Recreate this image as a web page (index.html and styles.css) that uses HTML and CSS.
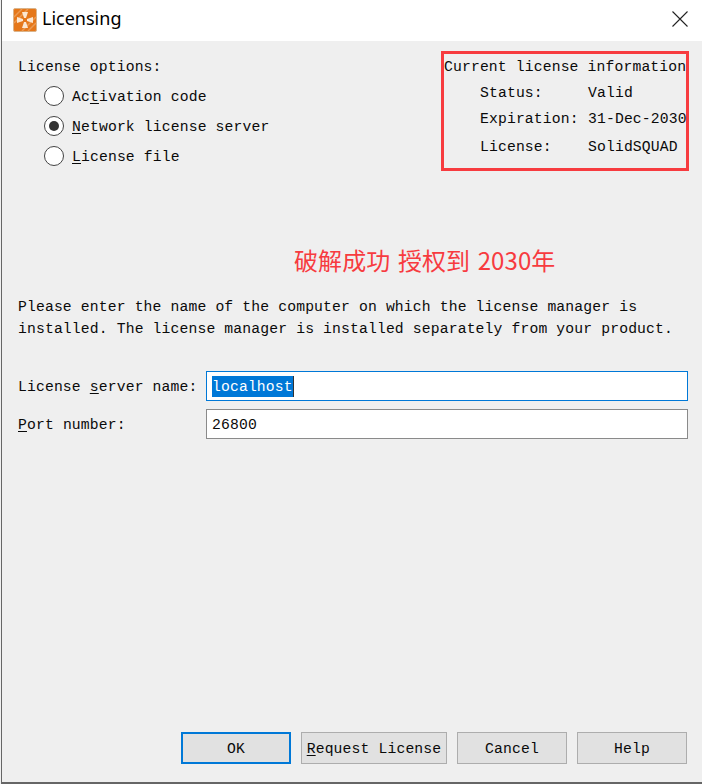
FILE: index.html
```html
<!DOCTYPE html>
<html lang="en">
<head>
<meta charset="utf-8">
<title>Licensing</title>
<link rel="stylesheet" href="styles.css">
</head>
<body>
<div class="window">
	<div class="title_bar">
		<svg class="app_icon" width="24" height="24" viewBox="0 0 24 24">
			<rect x="0.5" y="0.5" width="23" height="23" rx="1.5" fill="#e5771a" stroke="#d9b48c"/>
			<path d="M1 9L9 1M1 15L15 1M9 23L23 9M15 23L23 15" stroke="#eb9a52" stroke-width="1.5"/>
			<path d="M9 4H15L13 10H11ZM9 20H15L13 14H11ZM4 9V15L10 13V11ZM20 9V15L14 13V11Z" fill="#fbe6d0"/>
		</svg>
		<span class="title_text">Licensing</span>
		<svg class="close_btn" width="16" height="16" viewBox="0 0 16 16">
			<path d="M0.5 0.5L15.5 15.5M15.5 0.5L0.5 15.5" stroke="#222" stroke-width="1.1" fill="none"/>
		</svg>
	</div>
	<div class="content">
		<div class="top_row">
			<div class="options">
				<div class="options_title">License options:</div>
				<div class="radio_row"><i class="radio"></i><span>Ac<u>t</u>ivation code</span></div>
				<div class="radio_row"><i class="radio checked"></i><span><u>N</u>etwork license server</span></div>
				<div class="radio_row"><i class="radio"></i><span><u>L</u>icense file</span></div>
			</div>
			<div class="info_box">
				<div class="info_title">Current license information</div>
				<div class="info_row"><span>Status:</span><span>Valid</span></div>
				<div class="info_row"><span>Expiration:</span><span>31-Dec-2030</span></div>
				<div class="info_row"><span>License:</span><span>SolidSQUAD</span></div>
			</div>
		</div>
		<div class="notice">破解成功 授权到 2030年</div>
		<p class="hint">Please enter the name of the computer on which the license manager is<br>installed. The license manager is installed separately from your product.</p>
		<div class="field_row first">
			<label>License <u>s</u>erver name:</label>
			<div class="field focused"><span class="selected">localhost</span><i class="caret"></i></div>
		</div>
		<div class="field_row">
			<label><u>P</u>ort number:</label>
			<div class="field">26800</div>
		</div>
		<div class="buttons">
			<div class="btn btn_ok">OK</div>
			<div class="btn btn_wide"><u>R</u>equest License</div>
			<div class="btn">Cancel</div>
			<div class="btn">Help</div>
		</div>
	</div>
</div>
</body>
</html>
```

FILE: styles.css
```css
html,body{margin:0;padding:0;background:#f0f0f0;}
body{font-family:"Liberation Mono",monospace;font-size:14.73px;letter-spacing:.14px;color:#0a0a0a;}
u{text-underline-offset:2px;}
.window{width:701px;height:784px;margin-left:1px;box-sizing:border-box;border-left:1px solid #666;border-bottom:2px solid #666;display:flex;flex-direction:column;overflow:hidden;}
.title_bar{height:41px;flex:none;background:#fff;display:flex;align-items:center;padding:0 14px 0 11px;}
.app_icon{flex:none;margin-top:-2px;}
.title_text{font-family:"Noto Sans","Liberation Sans",sans-serif;font-size:18px;letter-spacing:0;color:#000;margin-left:5px;margin-top:-5px;}
.close_btn{margin-left:auto;margin-top:-4px;}
.content{flex:1;display:flex;flex-direction:column;background:#efefef;padding:0 13px 18px 16px;}
.top_row{display:flex;justify-content:space-between;}
.options{padding-top:16px;}
.options_title{height:24px;line-height:20px;}
.radio_row{display:flex;align-items:center;height:30px;padding-left:26px;}
.radio_row span{margin-left:8px;padding-top:2px;}
.radio{width:20px;height:20px;box-sizing:border-box;border:1.5px solid #444;border-radius:50%;background:#fff;display:flex;align-items:center;justify-content:center;}
.radio.checked:after{content:"";width:10px;height:10px;border-radius:50%;background:#333;}
.info_box{width:248px;height:120px;box-sizing:border-box;margin-top:10px;border:3px solid #f73b3f;padding:3px 0 0 0;}
.info_title{height:23px;line-height:20px;white-space:nowrap;}
.info_row{display:flex;height:26px;line-height:26px;padding-left:36px;white-space:nowrap;}
.info_row:last-child{height:28px;line-height:30px;}
.info_row span:first-child{width:108px;flex:none;}
.notice{font-family:"Noto Sans CJK SC",sans-serif;font-size:24px;line-height:34px;letter-spacing:.1px;word-spacing:2px;color:#f73b3f;margin:72px 0 0 276px;white-space:nowrap;}
.hint{margin:19px 0 0 0;line-height:22px;white-space:nowrap;}
.field_row{display:flex;align-items:center;height:30px;margin-top:8px;}
.field_row.first{margin-top:31px;}
.field_row label{width:188px;flex:none;padding-top:2px;}
.field{width:482px;height:30px;box-sizing:border-box;border:1px solid #8a8a8a;background:#fff;padding:2px 0 0 5px;display:flex;align-items:center;}
.field.focused{border:1px solid #0078d7;padding-top:0;}
.selected{background:#0078d7;color:#fff;line-height:20px;padding-top:1px;}
.caret{width:1px;height:21px;background:#333;}
.buttons{display:flex;gap:10px;margin-top:auto;padding-left:163px;}
.btn{width:110px;height:32px;box-sizing:border-box;border:1px solid #adadad;background:#e1e1e1;padding-top:2px;display:flex;align-items:center;justify-content:center;white-space:nowrap;}
.btn_ok{border:2px solid #0078d7;}
.btn_wide{width:146px;}
```
